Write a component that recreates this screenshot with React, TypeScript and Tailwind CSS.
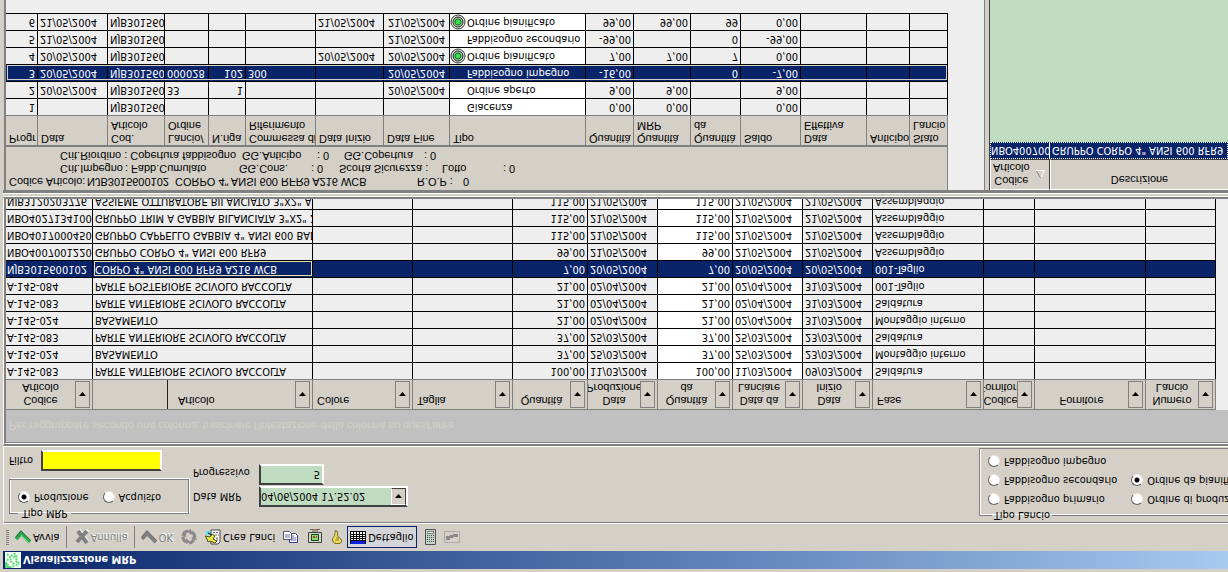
import { ReactNode } from 'react';
import clsx from 'clsx';

type Col = { lines: string[]; width: string; align?: 'left' | 'center'; right?: boolean; white?: boolean };

const planCols: Col[] = [
  { lines: ['Codice', 'Articolo'], width: 'w-[87px]', align: 'center' },
  { lines: ['Articolo'], width: 'w-[220px]' },
  { lines: ['Colore'], width: 'w-[100px]' },
  { lines: ['Taglia'], width: 'w-[100px]' },
  { lines: ['Quantità'], width: 'w-[75px]', align: 'center', right: true },
  { lines: ['Data', 'Produzione'], width: 'w-[70px]', align: 'center' },
  { lines: ['Quantità', 'da'], width: 'w-[75px]', align: 'center', right: true, white: true },
  { lines: ['Data da', 'Lanciare'], width: 'w-[70px]', align: 'center', white: true },
  { lines: ['Data', 'Inizio'], width: 'w-[70px]', align: 'center' },
  { lines: ['Fase'], width: 'w-[111px]' },
  { lines: ['Codice', 'Fornitore'], width: 'w-[51px]', align: 'center' },
  { lines: ['Fornitore'], width: 'w-[111px]', align: 'center' },
  { lines: ['Numero', 'Lancio'], width: 'w-[70px]', align: 'center' },
];

// code, article, quantity, production date, start date, phase
const planRows = [
  ['A-145-083', 'PARTE ANTERIORE SCIVOLO RACCOLTA', '100,00', '11/03/2004', '09/03/2004', 'Saldatura'],
  ['A-145-024', 'BASAMENTO', '37,00', '25/03/2004', '23/03/2004', 'Montaggio interno'],
  ['A-145-083', 'PARTE ANTERIORE SCIVOLO RACCOLTA', '37,00', '25/03/2004', '23/03/2004', 'Saldatura'],
  ['A-145-024', 'BASAMENTO', '21,00', '02/04/2004', '31/03/2004', 'Montaggio interno'],
  ['A-145-083', 'PARTE ANTERIORE SCIVOLO RACCOLTA', '21,00', '02/04/2004', '31/03/2004', 'Saldatura'],
  ['A-145-084', 'PARTE POSTERIORE SCIVOLO RACCOLTA', '21,00', '02/04/2004', '31/03/2004', '001-Taglio'],
  ['NJB3015600102', 'CORPO 4" ANSI 600 RFR9 A216 WCB', '7,00', '20/05/2004', '20/05/2004', '001-Taglio'],
  ['NBO4007001220', 'GRUPPO CORPO 4" ANSI 600 RFR9', '99,00', '21/05/2004', '21/05/2004', 'Assemblaggio'],
  ['NBO4017000450', 'GRUPPO CAPPELLO GABBIA 4" ANSI 600 BAD', '115,00', '21/05/2004', '21/05/2004', 'Assemblaggio'],
  ['NBO4027134100', 'GRUPPO TRIM A GABBIA BILANCIATA 3"X2" 2', '115,00', '21/05/2004', '21/05/2004', 'Assemblaggio'],
  ['NJB3120203776', 'ASSIEME OTTURATORE BILANCIATO 3"X2" A', '115,00', '21/05/2004', '21/05/2004', 'Assemblaggio'],
];
const selectedPlan = 6;

const detailCols: Col[] = [
  { lines: ['Progr'], width: 'w-[32px]', right: true },
  { lines: ['Data'], width: 'w-[70px]' },
  { lines: ['Cod.', 'Articolo'], width: 'w-[57px]' },
  { lines: ['Lancio/', 'Ordine'], width: 'w-[44px]' },
  { lines: ['N.riga'], width: 'w-[37px]', right: true },
  { lines: ['Commessa di', 'Riferimento'], width: 'w-[70px]' },
  { lines: ['Data Inizio'], width: 'w-[68px]' },
  { lines: ['Data Fine'], width: 'w-[66px]' },
  { lines: ['Tipo'], width: 'w-[136px]', white: true },
  { lines: ['Quantità'], width: 'w-[48px]', right: true },
  { lines: ['Quantità', 'MRP'], width: 'w-[57px]', right: true },
  { lines: ['Quantità', 'da'], width: 'w-[50px]', right: true },
  { lines: ['Saldo'], width: 'w-[60px]', right: true },
  { lines: ['Data', 'Effettiva'], width: 'w-[66px]' },
  { lines: ['Anticipo'], width: 'w-[43px]' },
  { lines: ['Stato', 'Lancio'], width: 'w-[38px]' },
];

const detailRows = [
  ['1', '', 'NJB301560', '', '', '', '', '', 'Giacenza', '0,00', '0,00', '', '0,00', '', '', ''],
  ['2', '20/05/2004', 'NJB301560', '33', '1', '', '', '20/05/2004', 'Ordine aperto', '9,00', '9,00', '', '9,00', '', '', ''],
  ['3', '20/05/2004', 'NJB301560', '000028', '102', '300', '', '20/05/2004', 'Fabbisogno impegno', '-16,00', '', '0', '-7,00', '', '', ''],
  ['4', '20/05/2004', 'NJB301560', '', '', '', '20/05/2004', '20/05/2004', 'Ordine pianificato', '7,00', '7,00', '7', '0,00', '', '', ''],
  ['5', '21/05/2004', 'NJB301560', '', '', '', '', '21/05/2004', 'Fabbisogno secondario', '-99,00', '', '0', '-99,00', '', '', ''],
  ['6', '21/05/2004', 'NJB301560', '', '', '', '21/05/2004', '21/05/2004', 'Ordine pianificato', '99,00', '99,00', '99', '0,00', '', '', ''],
];
const selectedDetail = 2;

function AppIcon() {
  return (
    <svg width="16" height="16" viewBox="0 0 16 16">
      <rect width="16" height="16" fill="#f4fff4" />
      <path d="M2 14 6 10 5 7 9 4 8 1M9 15l3-4-1-4 3-3M3 9 1 5l3-3M6 13l4-3 1 3M11 2l3 4" fill="none" stroke="#5fe07c" strokeWidth="2" strokeDasharray="2 1" />
      <path d="M0 0h8l-3 2H2v3H0z" fill="#5ad47a" />
    </svg>
  );
}

function CheckIcon({ gray }: { gray?: boolean }) {
  return (
    <svg width="16" height="16" viewBox="0 0 16 16">
      <path d="M1 6 6 12 15 3" fill="none" stroke={gray ? '#808080' : '#2fa84b'} strokeWidth="4" />
      <path d="M1 8 6 14 15 5" fill="none" stroke={gray ? '#707070' : '#2c6b3f'} strokeWidth="1" />
      {!gray && <path d="M6 10 14 2" stroke="#6ee68a" strokeWidth="1" />}
    </svg>
  );
}

function CrossIcon() {
  return (
    <svg width="14" height="16" viewBox="0 0 14 16">
      <path d="M2 3 12 14M12 2 3 14" stroke="#fff" strokeWidth="3" transform="translate(1 1)" />
      <path d="M2 3 12 14M12 2 3 14" stroke="#808080" strokeWidth="4" />
    </svg>
  );
}

function RecycleIcon() {
  return (
    <svg width="16" height="16" viewBox="0 0 16 16" fill="none" stroke="#8a8a8a" strokeWidth="3">
      <path d="M2 8a6 6 0 0 1 3-5M8 2a6 6 0 0 1 5 4M14 8a6 6 0 0 1-4 5M7 14a6 6 0 0 1-5-4" />
      <path d="M5 1l4 2-4 4zM16 5l-2 5-4-3zM10 16l-4-2 4-4zM0 9l5-1v4z" fill="#8a8a8a" stroke="none" />
    </svg>
  );
}

function LaunchIcon() {
  return (
    <svg width="16" height="16" viewBox="0 0 16 16">
      <path d="M6 1h7l2 2v12H6z" fill="#fff" stroke="#404040" />
      <path d="M11 5h3M11 7h3M10 10h4M8 12.500h5" stroke="#606060" strokeDasharray="2 1" />
      <path d="M1 10h4v4H1z" fill="#5fe0f0" />
      <path d="M0 9 5 8 7 11 10 9 8 6 12 4 10 2 5 4 3 3 2 6z" fill="#e8e850" stroke="#505010" />
      <path d="M3 12l4-2" stroke="#111" />
    </svg>
  );
}

function CopyIcon() {
  return (
    <svg width="16" height="14" viewBox="0 0 16 14">
      <path d="M6.500 1.500h8v7l-2 2h-6z" fill="#fff" stroke="#3c3c8c" />
      <path d="M8 4h5M8 6h5M8 8h3" stroke="#6a6ab8" />
      <path d="M.5 4.500h8v6l-2 2h-6z" fill="#fff" stroke="#55556e" />
      <path d="M2 7h5M2 9h5" stroke="#6a6ab8" />
    </svg>
  );
}

function PrinterIcon() {
  return (
    <svg width="16" height="16" viewBox="0 0 16 16">
      <path d="M1.500 2.500h13v10h-13z" fill="#d0d4c4" stroke="#3c443c" />
      <path d="M4.500 4.500h7v6h-7z" fill="#7fe070" stroke="#204020" />
      <path d="M6 7h2v2H6zM9 7h1v2H9z" fill="#b04040" />
      <path d="M3 15.500h10M5 14h6" stroke="#606060" />
      <path d="M6 15.500h4" stroke="#d06060" />
    </svg>
  );
}

function HandIcon() {
  return (
    <svg width="12" height="16" viewBox="0 0 12 16">
      <path d="M4.500 14.500c-1-3 0-5-3-8 0-3 1-5 4-5 4 0 6 1 5 3-1 3-4 3-4 5 0 3 0 5-2 5z" fill="#f0e060" stroke="#6b5c10" />
      <path d="M4 5h4M5 7h3" stroke="#8a7a20" />
    </svg>
  );
}

function GridIcon() {
  return (
    <svg width="16" height="14" viewBox="0 0 16 14">
      <path d="M0 0h16v13H0z" fill="#111" />
      <path d="M1 0h14v3H1z" fill="#1020e0" />
      <path d="M1 4h2v1H1zM4 4h2v1H4zM7 4h2v1H7zM10 4h2v1h-2zM13 4h2v1h-2zM1 6h2v1H1zM4 6h2v1H4zM7 6h2v1H7zM10 6h2v1h-2zM13 6h2v1h-2zM1 8h2v1H1zM4 8h2v1H4zM7 8h2v1H7zM10 8h2v1h-2zM13 8h2v1h-2zM1 10h2v2H1zM4 10h2v2H4zM7 10h2v2H7zM10 10h2v2h-2zM13 10h2v2h-2z" fill="#fff" />
    </svg>
  );
}

function CalculatorIcon() {
  return (
    <svg width="11" height="16" viewBox="0 0 11 16">
      <path d="M.5.5h10v15H.5z" fill="#c8d0c8" stroke="#505050" />
      <path d="M2 3.500h7M2 5.500h7M2 7.500h7M2 9.500h7" stroke="#305858" strokeDasharray="1 1" />
      <path d="M2.500 11.500h6v2h-6z" stroke="#708080" fill="#e8f4e8" />
      <path d="M8 13.500h1" stroke="#c03030" />
    </svg>
  );
}

function FlowIcon() {
  return (
    <svg width="16" height="14" viewBox="0 0 16 14">
      <path d="M.5 1.500h15v11H.5z" fill="none" stroke="#8a8a8a" strokeDasharray="1 1" />
      <path d="M2 4h4v4H2zM9 7h5v3H9zM6 6h3v3H6z" fill="#8a8a8a" />
    </svg>
  );
}

function TargetIcon() {
  return (
    <svg width="16" height="16" viewBox="0 0 16 16" className="shrink-0">
      <circle cx="8" cy="8" r="7" fill="#e0e8e0" stroke="#303830" strokeWidth="1" />
      <circle cx="8" cy="8" r="5" fill="#b0b8b0" stroke="#202820" />
      <circle cx="8" cy="8" r="3" fill="#35e04a" stroke="#0b7a1c" />
    </svg>
  );
}

function ToolButton({ icon, label, disabled, active }: { icon: ReactNode; label?: string; disabled?: boolean; active?: boolean }) {
  return (
    <button
      disabled={disabled}
      aria-label={label ?? 'Strumento'}
      className={clsx(
        'flex h-[22px] shrink-0 items-center gap-0.5 whitespace-nowrap',
        active ? 'border border-[#0a246a] bg-[#d4d5d8] px-0.5' : '',
        disabled && 'text-[#808080] [text-shadow:1px_1px_0_#fff]',
      )}
    >
      {icon}
      {label}
    </button>
  );
}

function Separator() {
  return <span className="h-[22px] w-px shrink-0 bg-[#808080]" />;
}

function Radio({ name, label, checked }: { name: string; label: string; checked?: boolean }) {
  return (
    <label className="flex h-[19px] items-center gap-1 whitespace-nowrap">
      <input
        type="radio"
        name={name}
        defaultChecked={checked}
        className="h-3 w-3 shrink-0 appearance-none rounded-full border border-t-[#606060] border-r-[#e8e6e0] border-b-[#e8e6e0] border-l-[#606060] bg-white checked:bg-[radial-gradient(circle,#000_2px,#fff_3px)]"
      />
      {label}
    </label>
  );
}

function HeaderLines({ lines }: { lines: string[] }) {
  return <>{lines.map(l => <span key={l} className="block leading-[13px]">{l}</span>)}</>;
}

function PlanTable() {
  return (
    <table className="w-[1210px] table-fixed border-separate border-spacing-0">
      <thead className="font-['Liberation_Sans',sans-serif]">
        <tr>
          {planCols.map((c, i) => (
            <th key={i} className={clsx('h-[31px] border-y border-r border-[#808080] bg-[#d4d0c8] p-0 font-normal', c.width)}>
              <div className="flex h-[29px] items-center pr-0.5">
                {i === 1 && <span className="h-full w-[75px] shrink-0 border-r border-[#202020]" />}
                <div
                  className={clsx(
                    'flex h-full min-w-0 flex-1 flex-col overflow-hidden pt-0.5 whitespace-nowrap',
                    c.align === 'center' ? 'items-center' : i === 1 ? 'items-start pl-2.5' : 'items-start pl-1',
                  )}
                >
                  <HeaderLines lines={c.lines} />
                </div>
                <button aria-label={`Filtra ${c.lines.join(' ')}`} className="flex h-[27px] w-[15px] shrink-0 items-center justify-center border border-[#808080]">
                  <svg width="7" height="4" viewBox="0 0 7 4"><path d="M0 0h7L3.500 4z" /></svg>
                </button>
              </div>
            </th>
          ))}
        </tr>
      </thead>
      <tbody>
        {planRows.map(([code, article, qty, date, start, phase], r) => {
          const selected = r === selectedPlan;
          return (
            <tr key={r} className={selected ? 'bg-[#0a246a] text-white' : 'bg-[#eeeeee]'}>
              {[code, article, '', '', qty, date, qty, date, start, phase, '', '', ''].map((v, i) => (
                <td
                  key={i}
                  className={clsx(
                    'h-[17px] overflow-hidden border-r border-b border-black py-0 leading-4 whitespace-nowrap',
                    i === 0 ? 'px-px' : 'px-0.5',
                    planCols[i].right && 'text-right',
                    planCols[i].white && !selected && 'bg-white',
                    selected && i === 1 && 'outline -outline-offset-2 outline-[#e8dca8]',
                  )}
                >
                  {v}
                </td>
              ))}
            </tr>
          );
        })}
      </tbody>
    </table>
  );
}

function DetailTable() {
  return (
    <table className="w-[942px] table-fixed border-separate border-spacing-0">
      <thead className="font-['Liberation_Sans',sans-serif]">
        <tr>
          {detailCols.map((c, i) => (
            <th key={i} className={clsx('h-[30px] overflow-hidden border-r border-b border-[#808080] bg-[#d4d0c8] py-0 pr-0 pl-[3px] text-left align-top font-normal whitespace-nowrap', c.width)}>
              <HeaderLines lines={c.lines} />
            </th>
          ))}
        </tr>
      </thead>
      <tbody>
        {detailRows.map((row, r) => {
          const selected = r === selectedDetail;
          return (
            <tr key={r} className={selected ? 'bg-[#0a246a] text-white outline -outline-offset-2 outline-[#d4d0c8]' : 'bg-[#eeeeee]'}>
              {row.map((v, i) => (
                <td
                  key={i}
                  className={clsx(
                    'h-[17px] overflow-hidden border-r border-b border-black py-0 leading-4 whitespace-nowrap',
                    i === 7 ? 'px-1' : i === 8 ? 'px-0' : 'px-0.5',
                    detailCols[i].right && 'text-right',
                    detailCols[i].white && !selected && 'bg-white',
                  )}
                >
                  {i === 8 ? (
                    <span className="flex h-4 items-center gap-px">
                      {v === 'Ordine pianificato' ? <TargetIcon /> : <span className="w-4 shrink-0" />}
                      {v}
                    </span>
                  ) : v}
                </td>
              ))}
            </tr>
          );
        })}
      </tbody>
    </table>
  );
}

export default function App() {
  return (
    <div className="flex h-screen w-full -scale-y-100 flex-col overflow-hidden bg-[#d4d0c8] pt-[3px] pl-[3px] font-['DejaVu_Sans_Condensed','DejaVu_Sans',sans-serif] text-[11px] leading-[13px] text-black">
      {/* Title bar */}
      <header className="flex h-[18px] shrink-0 items-center gap-0.5 bg-linear-to-r from-[#0a246a] to-[#a6caf0] pl-0.5">
        <AppIcon />
        <h1 className="text-[11px] font-bold text-white">Visualizzazione MRP</h1>
      </header>

      {/* Toolbar */}
      <div className="flex h-7 shrink-0 items-center border-b border-white pl-[3px]">
        <span className="mr-1.5 h-4 w-[3px] shrink-0 bg-[repeating-linear-gradient(#808080_0_1px,transparent_1px_2px)]" />
        <ToolButton icon={<CheckIcon />} label="Avvia" />
        <span className="w-1.5" />
        <Separator />
        <span className="w-2" />
        <ToolButton icon={<CrossIcon />} label="Annulla" disabled />
        <span className="w-1.5" />
        <Separator />
        <span className="w-1.5" />
        <ToolButton icon={<CheckIcon gray />} label="OK" disabled />
        <div className="ml-2 flex items-center gap-2">
          <ToolButton icon={<RecycleIcon />} disabled />
          <ToolButton icon={<LaunchIcon />} label="Crea Lanci" />
          <ToolButton icon={<CopyIcon />} />
          <ToolButton icon={<PrinterIcon />} />
          <ToolButton icon={<HandIcon />} />
        </div>
        <div className="ml-1 flex items-center gap-2">
          <ToolButton icon={<GridIcon />} label="Dettaglio" active />
          <ToolButton icon={<CalculatorIcon />} />
          <ToolButton icon={<FlowIcon />} disabled />
        </div>
      </div>

      {/* Filter form */}
      <form className="flex h-[77px] shrink-0 border border-r-0 border-t-[#808080] border-b-white border-l-white">
        <div className="flex flex-col items-start gap-2 pt-0.5 pl-[5px]">
          <fieldset className="flex h-[41px] w-[180px] items-end gap-[14px] border border-[#808080] pl-2 shadow-[1px_1px_0_#fff,inset_1px_1px_0_#fff]">
            <legend className="px-1">Tipo MRP</legend>
            <Radio name="tipo" label="Produzione" checked />
            <Radio name="tipo" label="Acquisto" />
          </fieldset>
          <label className="flex h-[21px] items-center gap-2">
            Filtro
            <input className="h-[21px] w-[121px] border-2 border-t-[#404040] border-r-white border-b-white border-l-[#404040] bg-[#ffff00]" />
          </label>
        </div>
        <div className="ml-1 flex flex-col gap-px pt-[15px]">
          <label className="flex items-center">
            <span className="w-[66px]">Data MRP</span>
            <span className="relative">
              <select className="h-[21px] w-[149px] appearance-none border-2 border-t-[#404040] border-r-white border-b-white border-l-[#404040] bg-[#c0dcc0]">
                <option>04/06/2004 17.52.02</option>
              </select>
              <span className="pointer-events-none absolute inset-y-[2px] right-[2px] flex w-[15px] items-center justify-center border border-t-white border-r-[#404040] border-b-[#404040] border-l-white bg-[#d4d0c8]">
                <svg width="7" height="4" viewBox="0 0 7 4"><path d="M0 0h7L3.500 4z" /></svg>
              </span>
            </span>
          </label>
          <label className="flex items-start">
            <span className="w-[66px] pt-1.5">Progressivo</span>
            <input defaultValue="5" className="h-[21px] w-[65px] border-2 border-t-[#404040] border-r-white border-b-white border-l-[#404040] bg-[#c0dcc0] pr-0.5 text-right" />
          </label>
        </div>
        <fieldset className="ml-auto flex h-[74px] w-[249px] min-w-0 shrink-0 gap-[14px] overflow-hidden border border-r-0 border-[#808080] pl-2 shadow-[inset_1px_1px_0_#fff]">
          <legend className="ml-1 px-0.5">Tipo Lancio</legend>
          <div className="shrink-0">
            <Radio name="lancio" label="Fabbisogno primario" />
            <Radio name="lancio" label="Fabbisogno secondario" />
            <Radio name="lancio" label="Fabbisogno impegno" />
          </div>
          <div className="shrink-0">
            <Radio name="lancio" label="Ordine di produzione" />
            <Radio name="lancio" label="Ordine da pianificare" checked />
          </div>
        </fieldset>
      </form>

      {/* Planning grid */}
      <section className="h-[249px] shrink-0 overflow-hidden border-y-2 border-l border-y-[#808080] border-l-white">
        <div className="h-full overflow-hidden border-t border-l-2 border-t-white border-l-[#808080] bg-[#eeeeee]">
          <p className="flex h-[33px] items-center border-t border-[#808080] bg-[#c0c0c0] pl-[3px] font-['Liberation_Sans',sans-serif] text-[#d4d0c8]">
            Per raggruppare secondo una colonna, trascinare l'intestazione della colonna su quest'area
          </p>
          <PlanTable />
        </div>
      </section>

      <div className="h-1 shrink-0 border-y border-white bg-[#d4d0c8]" />

      {/* MRP detail */}
      <div className="flex min-h-0 flex-1 border-t-[3px] border-[#808080]">
        <section className="ml-px min-w-0 flex-1 overflow-hidden border-r border-l-2 border-[#808080] bg-[#eeeeee]">
          <div className="h-[45px] w-[942px] border-r border-b-2 border-[#808080] bg-[#d4d0c8] pt-0.5 pl-[3px] font-['Liberation_Sans',sans-serif] whitespace-nowrap">
            <p className="flex">
              <span className="w-[78px]">Codice Articolo:</span>
              <span className="w-[88px]">NJB3015600102</span>
              <span className="w-[242px]">CORPO 4" ANSI 600 RFR9 A216 WCB</span>
              <span className="w-[46px]">R.O.P :</span>
              <span>0</span>
            </p>
            <p className="flex pl-[51px]">
              <span className="w-[65px]">Crit.Impegno</span>
              <span className="w-[114px]">: Fabb.Cumulato</span>
              <span className="w-[72px]">GG.Cons.</span>
              <span className="w-[28px]">: 0</span>
              <span className="w-[103px]">Scorta Sicurezza :</span>
              <span className="w-[61px]">Lotto</span>
              <span>: 0</span>
            </p>
            <p className="flex pl-[51px]">
              <span className="w-[182px]">Crit.Riordino : Copertura fabbisogno</span>
              <span className="w-[75px]">GG.Anticipo</span>
              <span className="w-[27px]">: 0</span>
              <span className="w-[80px]">GG.Copertura</span>
              <span>: 0</span>
            </p>
          </div>
          <DetailTable />
        </section>

        <aside className="ml-1 w-[239px] shrink-0 overflow-hidden border-l border-[#404040] bg-[#c0dcc0]">
          <table className="w-full table-fixed border-separate border-spacing-0">
            <thead className="font-['Liberation_Sans',sans-serif]">
              <tr>
                <th className="h-[31px] w-[60px] border-t border-r border-b border-l border-t-white border-r-[#404040] border-b-[#404040] border-l-white bg-[#d4d0c8] p-0 font-normal">
                  <div className="flex items-center gap-1.5 pl-0.5">
                    <div><HeaderLines lines={['Codice', 'Articolo']} /></div>
                    <svg width="9" height="8" viewBox="0 0 9 8">
                      <path d="M4.500 0 8.500 7.500H0" fill="none" stroke="#fff" />
                      <path d="M4.500 0 .5 7" stroke="#808080" />
                    </svg>
                  </div>
                </th>
                <th className="h-[31px] border-t border-b border-l border-t-white border-b-[#404040] border-l-white bg-[#d4d0c8] p-0 pt-[3px] align-top font-normal">
                  Descrizione
                </th>
              </tr>
            </thead>
            <tbody>
              <tr className="bg-[#0a246a] text-white outline-1 -outline-offset-1 outline-dotted outline-white">
                <td className="h-[17px] overflow-hidden border-r border-white py-0 pl-px leading-4 whitespace-nowrap">NBO400700</td>
                <td className="h-[17px] overflow-hidden py-0 pl-0.5 leading-4 whitespace-nowrap">GRUPPO CORPO 4" ANSI 600 RFR9</td>
              </tr>
            </tbody>
          </table>
        </aside>
      </div>
    </div>
  );
}
